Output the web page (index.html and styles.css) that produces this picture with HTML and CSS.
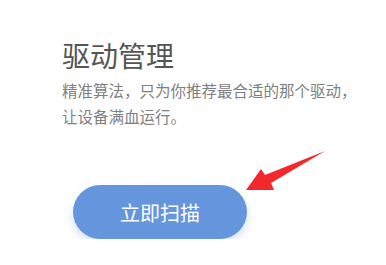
FILE: index.html
```html
<!DOCTYPE html>
<html lang="zh-CN">
<head>
    <meta charset="UTF-8">
    <title>驱动管理</title>
    <link rel="stylesheet" href="styles.css">
</head>
<body>
    <div id="box">
        <h2 class="title">驱动管理</h2>
        <p class="desc">精准算法，只为你推荐最合适的那个驱动，<br>让设备满血运行。</p>
        <div class="action">
            <button class="scan-btn" type="button">立即扫描</button>
            <svg class="arrow" width="90" height="50" viewBox="0 0 90 50">
                <polygon points="0,44 15,23 19,29 79,5 25,37 28,44" fill="#f2282c"/>
            </svg>
        </div>
    </div>
</body>
</html>
```

FILE: styles.css
```css
body{
    margin: 0;
    background: #fff;
    font-family: "Microsoft YaHei", "Noto Sans CJK SC", sans-serif;
}

#box{
    padding: 40px 0 0 62px;
}

.title{
    margin: 0;
    font-size: 28px;
    font-weight: normal;
    line-height: 30px;
    color: #555;
}

.desc{
    margin: 7px 0 0;
    font-size: 15.5px;
    line-height: 26px;
    color: #808080;
}

.action{
    position: relative;
    margin-top: 56px;
    padding-left: 11px;
}

.scan-btn{
    width: 174px;
    height: 54px;
    border: none;
    border-radius: 27px;
    background: #6595dd;
    color: #fff;
    font-family: inherit;
    font-size: 20px;
    box-shadow: 0 5px 10px rgba(101, 149, 221, 0.25);
}

.arrow{
    position: absolute;
    left: 184px;
    top: -39px;
}
```
